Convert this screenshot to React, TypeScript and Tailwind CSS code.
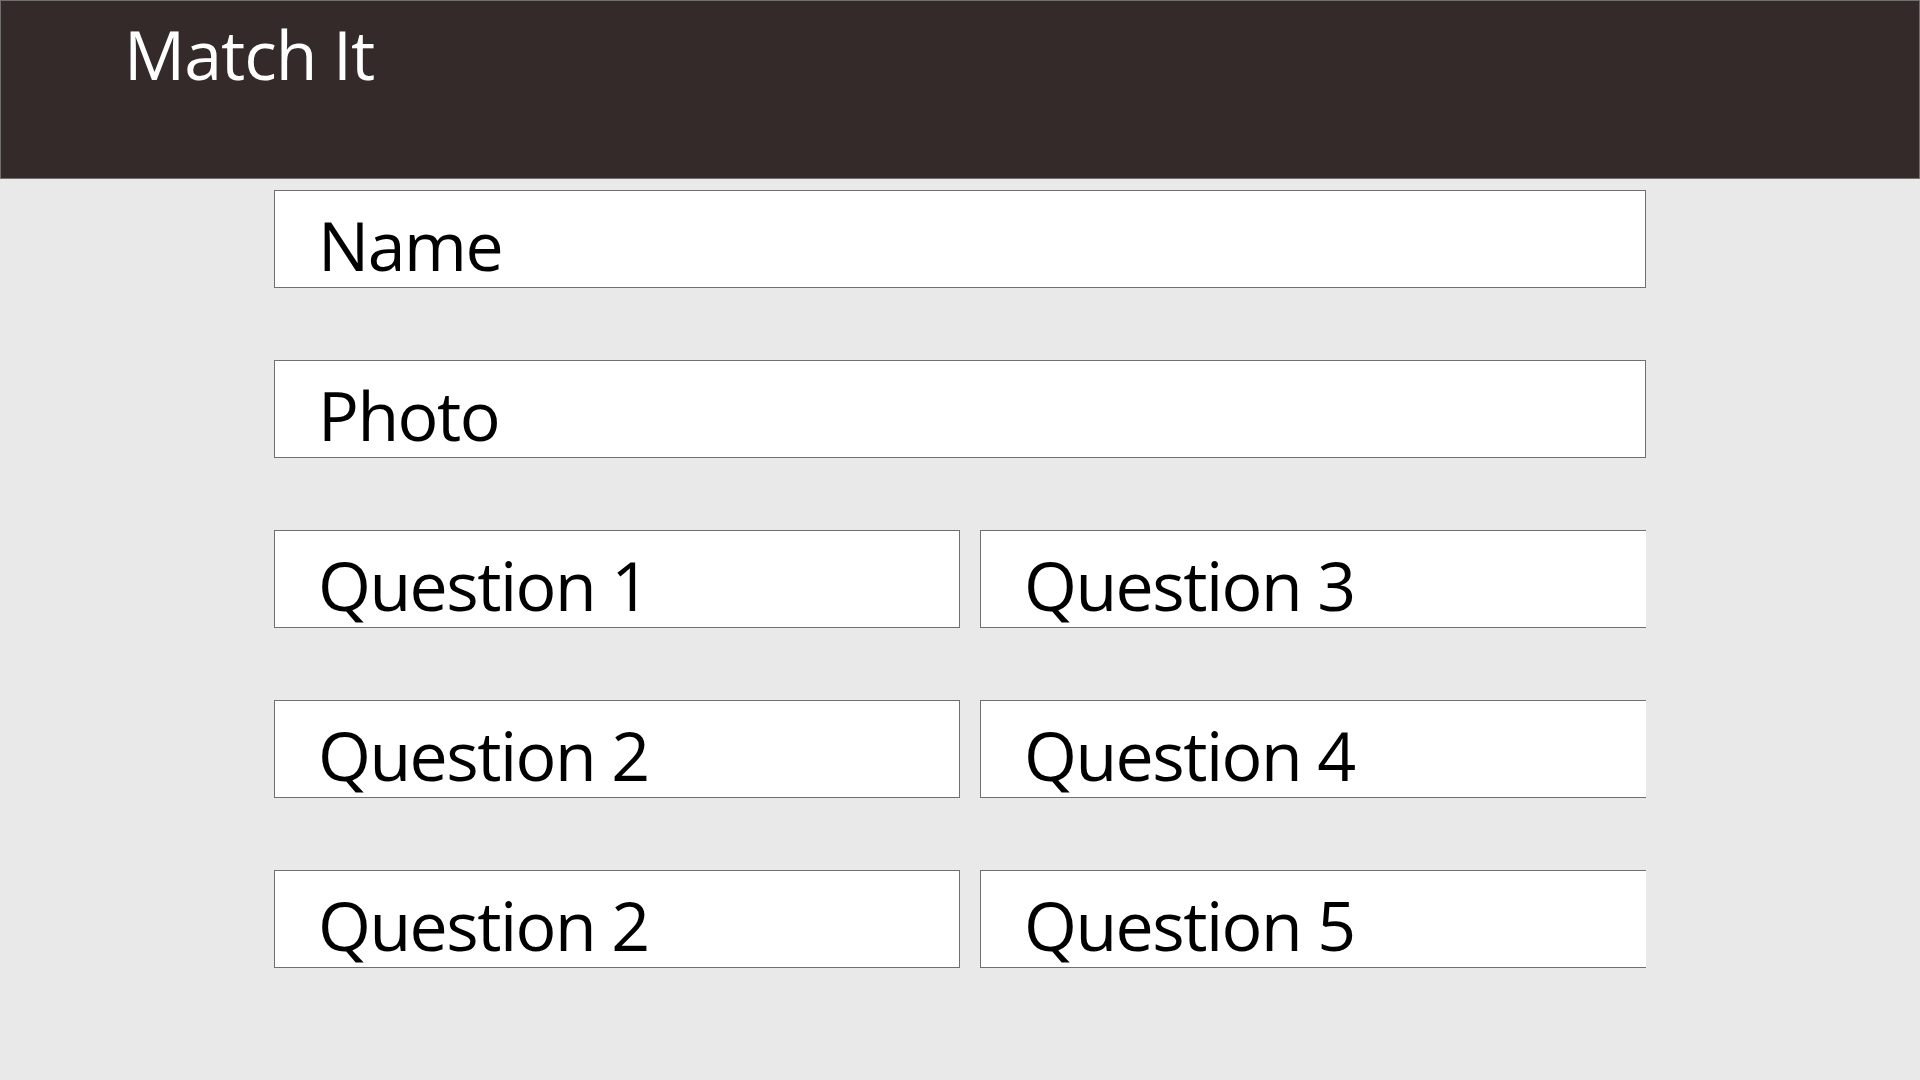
import React from "react";

const font = { fontFamily: '"Open Sans", "Noto Sans", sans-serif' };

function Field({ label, size }: { label: string; size: "full" | "left" | "right" }) {
  const width =
    size === "full" ? "w-full" : size === "left" ? "w-[686px]" : "w-[666px] border-r-0";
  return (
    <div
      className={`h-[98px] shrink-0 border border-[#707070] bg-white pl-[43px] pt-[20px] text-[68px] leading-none tracking-[-1.5px] text-black ${width}`}
    >
      {label}
    </div>
  );
}

export default function App() {
  const pairs = [
    ["Question 1", "Question 3"],
    ["Question 2", "Question 4"],
    ["Question 2", "Question 5"],
  ];

  return (
    <div className="min-h-[1080px] w-full bg-[#e9e9e9]" style={font}>
      <header className="h-[179px] border border-[#707070] bg-[#352a2a] pl-[123px] pt-[19px] text-[68px] leading-none tracking-[-1px] text-white">
        Match It
      </header>

      <div className="ml-[274px] mt-[11px] flex w-[1372px] flex-col gap-[72px]">
        <Field label="Name" size="full" />
        <Field label="Photo" size="full" />
        {pairs.map(([a, b], i) => (
          <div key={i} className="flex gap-[20px]">
            <Field label={a} size="left" />
            <Field label={b} size="right" />
          </div>
        ))}
      </div>
    </div>
  );
}
